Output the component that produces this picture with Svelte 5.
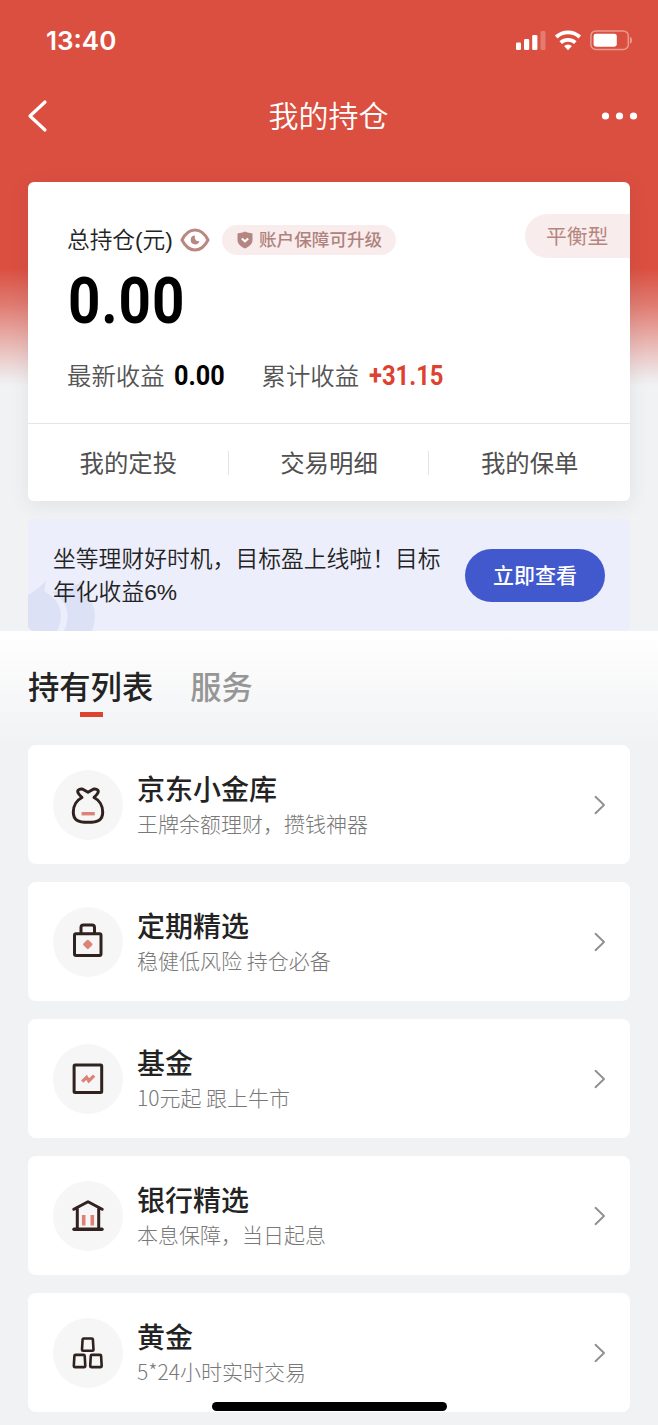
<script lang="ts">
  interface Holding {
    id: 'vault' | 'fixed' | 'fund' | 'bank' | 'gold';
    title: string;
    desc: string;
  }

  const links = ['我的定投', '交易明细', '我的保单'];

  const holdings: Holding[] = [
    { id: 'vault', title: '京东小金库', desc: '王牌余额理财，攒钱神器' },
    { id: 'fixed', title: '定期精选', desc: '稳健低风险 持仓必备' },
    { id: 'fund', title: '基金', desc: '10元起 跟上牛市' },
    { id: 'bank', title: '银行精选', desc: '本息保障，当日起息' },
    { id: 'gold', title: '黄金', desc: '5*24小时实时交易' },
  ];
</script>

<div class="page">
  <div class="status">
    <span class="time">13:40</span>
    <svg class="signals" width="118" height="22" viewBox="0 0 118 22" fill="#fff">
      <rect x="1" y="13.5" width="5" height="7.5" rx="1.3" />
      <rect x="9" y="10" width="5.2" height="11" rx="1.3" />
      <rect x="17.2" y="6" width="5.2" height="15" rx="1.3" />
      <rect x="25.5" y="2" width="5" height="19" rx="1.3" opacity=".25" />
      <g fill="none" stroke="#fff" stroke-width="3.8">
        <path d="M41.2 8a17.4 17.4 0 0 1 23.6 0" />
        <path d="M45.7 13.6a11 11 0 0 1 14.6 0" />
      </g>
      <path d="M53 21.3l-3.9-4.3a5.6 5.6 0 0 1 7.8 0z" />
      <rect x="75.9" y="1.9" width="37.4" height="18.6" rx="5" fill="none" stroke="#fff" stroke-width="1.5" opacity=".42" />
      <rect x="78.6" y="4.7" width="23.2" height="13" rx="2.4" />
      <path d="M114.9 7.8c3 1.2 3 5.8 0 7z" opacity=".42" />
    </svg>
  </div>

  <header class="nav">
    <svg width="22" height="34" viewBox="0 0 22 34" fill="none" stroke="#fff" stroke-width="3.2" stroke-linecap="round" stroke-linejoin="round">
      <path d="M19 3L4 17l15 14" />
    </svg>
    <h1>我的持仓</h1>
    <svg width="38" height="10" viewBox="0 0 38 10" fill="#fff">
      <circle cx="5.5" cy="5" r="3.6" />
      <circle cx="19.5" cy="5" r="3.6" />
      <circle cx="33.5" cy="5" r="3.6" />
    </svg>
  </header>

  <section class="card">
    <div class="summary">
      <div class="row">
        <span class="label">总持仓(元)</span>
        <svg class="eye" width="30" height="24" viewBox="0 0 30 24" fill="none" stroke="#bb8782" stroke-width="3">
          <path d="M2 12C5.5 5 10 2 15 2s9.5 3 13 10c-3.5 7-8 10-13 10S5.5 19 2 12z" stroke-linejoin="round" />
          <path d="M15 7.6a4.4 4.4 0 1 0 4.4 5.4c-2.8.7-5.4-1.4-4.4-5.4z" fill="#bb8782" stroke="none" />
        </svg>
        <span class="upgrade">
          <svg width="16" height="18" viewBox="0 0 16 18">
            <path d="M8 .6C5.8 2 3.2 2.200 1.200 2.300.7 2.300.5 2.700.5 3.100v6c0 4 3.400 6.600 7.500 8.400 4.100-1.800 7.500-4.400 7.500-8.400v-6c0-.4-.2-.8-.7-.8C12.800 2.200 10.200 2 8 .6z" fill="#b58581" />
            <path d="M4.8 7.4L8 10.300l3.200-2.900" fill="none" stroke="#fff" stroke-width="2" />
          </svg>
          <span>账户保障可升级</span>
        </span>
        <span class="risk">平衡型</span>
      </div>
      <div class="total"><span>0.00</span></div>
      <div class="earnings">
        <span class="name">最新收益</span>
        <span class="num latest">0.00</span>
        <span class="name">累计收益</span>
        <span class="num gain">+31.15</span>
      </div>
    </div>
    <nav class="links">
      {#each links as link}
        <span>{link}</span>
      {/each}
    </nav>
  </section>

  <section class="banner">
    <svg class="quote" width="70" height="52" viewBox="0 0 70 52" fill="#dde1f6">
      <path d="M0 16C7 12 13 7 19 1c-2 4-3 8-2 12 10 5 16 14 16 24 0 6-2 11-4 15H0z" />
      <path d="M24 13c7-1 13-2 19-5 5-2 9-4 12-7-2 4-2 8-1 12 8 5 13 14 13 23 0 6-1 11-3 16H36c7-15 4-30-12-39z" />
    </svg>
    <p>坐等理财好时机，目标盈上线啦！目标年化收益6%</p>
    <button>立即查看</button>
  </section>

  <div class="tabs">
    <span class="tab on">持有列表</span>
    <span class="tab">服务</span>
  </div>

  <div class="list">
    {#each holdings as item (item.id)}
      <div class="item">
        <div class="ic">
          <svg width="36" height="40" viewBox="0 0 36 40" fill="none" stroke="#30221f" stroke-width="3" stroke-linejoin="round" stroke-linecap="round">
            {#if item.id === 'vault'}
              <path d="M12 12.5C10 10.5 8.2 8.8 7.8 7c-.5-2.200 2.500-3.500 5-2.700L18 7.300l5.200-3c2.500-.8 5.500.5 5 2.700-.4 1.800-2.200 3.500-4.200 5.500 5 2.500 8.700 8 8.700 14.500 0 8-4.500 10.300-14.700 10.300S3.300 35 3.300 27c0-6.500 3.700-12 8.700-14.500z" />
              <path d="M11.6 28.7h13.2" stroke="#dc8277" stroke-linecap="butt" stroke-width="3.4" />
            {:else if item.id === 'fixed'}
              <rect x="4.5" y="11.8" width="26.5" height="21.8" rx="1.5" />
              <path d="M11 11.5V5.5A2.5 2.5 0 0 1 13.5 3H22a2.5 2.5 0 0 1 2.5 2.5v6" />
              <path d="M17.8 18.8l3.6 3.6-3.6 3.6-3.6-3.6z" fill="#dc8277" stroke="#dc8277" stroke-width="2.2" />
            {:else if item.id === 'fund'}
              <rect x="4.1" y="5.9" width="27.6" height="27.6" rx="1" />
              <path d="M12.2 22.6l4.4-4.2 2.2 3.4 5.4-5.2" stroke="#dc8277" stroke-width="3.3" stroke-linecap="butt" stroke-linejoin="miter" />
            {:else if item.id === 'bank'}
              <path d="M3.8 13.3L18 5.7l14.2 7.6M7.3 13V33M28.7 13V33" />
              <path d="M4 33.3h28" stroke-width="3.4" />
              <path d="M13.7 19v10.5M22.3 19v10.5" stroke="#dc8277" stroke-width="3.6" stroke-linecap="butt" />
            {:else}
              <g stroke-width="2.6">
                <path d="M13.7 5.5h8.1q1 0 1.100 1l.6 10.200q0 1-1 1H13q-1 0-1-1l.6-10.200q.1-1 1.100-1z" />
                <path d="M5.5 21.900h8.100q1 0 1.100 1l.6 10.200q0 1-1 1H4.800q-1 0-1-1l.6-10.200q.1-1 1.100-1z" />
                <path d="M21.9 21.900H30q1 0 1.100 1l.6 10.200q0 1-1 1H21.200q-1 0-1-1l.6-10.200q.1-1 1.100-1z" />
              </g>
            {/if}
          </svg>
        </div>
        <div class="text">
          <div class="title">{item.title}</div>
          <div class="desc">{item.desc}</div>
        </div>
        <svg class="arrow" width="12" height="20" viewBox="0 0 12 20" fill="none" stroke="#8f8f8f" stroke-width="1.9" stroke-linecap="round" stroke-linejoin="round">
          <path d="M1.5 1.8L10 10l-8.5 8.2" />
        </svg>
      </div>
    {/each}
  </div>

  <div class="home"></div>
</div>

<style>
  :global(body) { background: #f1f2f4; }

  .page {
    position: relative;
    box-sizing: border-box;
    width: 658px;
    height: 1425px;
    overflow: hidden;
    background: linear-gradient(#db4f40 0, #db4f40 268px, #e07a70 304px, #e9b5b0 342px, #eee4e5 374px, #f1f2f4 386px);
    font-family: "Liberation Sans", "Noto Sans CJK SC", sans-serif;
    color: #232323;
  }

  .status {
    display: flex;
    justify-content: space-between;
    align-items: center;
    height: 80px;
    padding: 0 25px 0 46px;
    color: #fff;
  }
  .time {
    font-family: Inter, sans-serif;
    font-size: 26px;
    font-weight: 600;
  }

  .nav {
    display: flex;
    justify-content: space-between;
    align-items: center;
    height: 72px;
    padding: 0 20px 0 26px;
    color: #fff;
  }
  h1 {
    margin: 2px 0 0 9px;
    font-size: 30px;
    font-weight: 350;
    line-height: 40px;
  }

  .card {
    margin: 30px 28px 0;
    height: 319px;
    border-radius: 6px;
    background: #fff;
    box-shadow: 0 4px 20px rgba(60, 70, 80, 0.09);
  }
  .summary {
    box-sizing: border-box;
    height: 242px;
    padding: 32px 0 0 39px;
    border-bottom: 1px solid #e4e5e6;
  }
  .row {
    display: flex;
    height: 52px;
    align-items: center;
  }
  .label {
    width: 107px;
    margin-top: -3px;
    font-size: 22.7px;
    font-weight: 350;
    white-space: nowrap;
  }
  .eye { margin: 0 12px 0 6px; }
  .upgrade {
    display: flex;
    align-items: center;
    gap: 6px;
    box-sizing: border-box;
    width: 174px;
    height: 30px;
    padding-left: 15px;
    border-radius: 15px;
    background: #f9ecec;
    color: #b0827d;
    font-size: 17.6px;
    font-weight: 500;
    white-space: nowrap;
  }
  .upgrade span {
    height: 30px;
    line-height: 30px;
  }
  .risk {
    box-sizing: border-box;
    width: 105px;
    height: 44px;
    margin: -8px 0 0 auto;
    padding-left: 21px;
    border-radius: 22px 0 0 22px;
    background: #f9ecec;
    color: #b58680;
    font-size: 20.8px;
    line-height: 46px;
  }
  .total {
    height: 70px;
    padding-left: 1px;
    color: #000;
    font: bold 65px/71px Roboto, sans-serif;
  }
  .total span {
    display: inline-block;
    letter-spacing: 1px;
    transform: scaleX(0.87);
    transform-origin: left;
  }
  .earnings {
    display: flex;
    align-items: center;
    height: 36px;
    margin-top: 22px;
    font-size: 24.4px;
    font-weight: 350;
    color: #555;
    white-space: nowrap;
  }
  .name {
    height: 36px;
    line-height: 37px;
  }
  .num {
    font: bold 28px/36px Roboto, sans-serif;
    transform: scaleX(0.9);
    transform-origin: left;
  }
  .latest {
    width: 88px;
    margin-left: 9px;
    color: #000;
  }
  .gain {
    margin-left: 10px;
    color: #dd4230;
    transform: scaleX(0.85);
  }

  .links {
    display: flex;
    height: 77px;
    align-items: center;
  }
  .links span {
    flex: 1;
    height: 24px;
    font-size: 24.4px;
    line-height: 26px;
    text-align: center;
    color: #505050;
  }
  .links span + span { box-shadow: -1px 0 #e3e4e5; }

  .banner {
    position: relative;
    display: flex;
    align-items: center;
    justify-content: space-between;
    height: 112px;
    margin: 18px 28px 0;
    padding: 0 25px;
    box-sizing: border-box;
    border-radius: 6px;
    overflow: hidden;
    background: #eceefb;
  }
  .quote {
    position: absolute;
    left: 0;
    bottom: 0;
  }
  p {
    position: relative;
    width: 392px;
    margin: 2px 0 0;
    font-size: 22.8px;
    font-weight: 350;
    line-height: 33px;
  }
  button {
    width: 140px;
    height: 53px;
    padding: 0 0 2px;
    border: 0;
    border-radius: 27px;
    background: #4259ce;
    color: #fff;
    font: 500 21px/51px "Noto Sans CJK SC", sans-serif;
  }

  .tabs {
    display: flex;
    gap: 37px;
    height: 114px;
    padding-left: 28px;
    background: linear-gradient(#fff, #f1f2f4);
  }
  .tab {
    position: relative;
    height: 86px;
    font-size: 31.3px;
    font-weight: 500;
    line-height: 115px;
    color: #969696;
  }
  .on { color: #232323; }
  .on::after {
    content: '';
    position: absolute;
    left: 52px;
    bottom: 0;
    width: 23px;
    height: 5px;
    background: #dc4330;
  }

  .list {
    display: flex;
    flex-direction: column;
    gap: 18px;
    margin: 0 28px;
  }
  .item {
    display: flex;
    align-items: center;
    box-sizing: border-box;
    height: 119px;
    padding: 0 24px 0 25px;
    border-radius: 8px;
    background: #fff;
  }
  .ic {
    display: grid;
    place-items: center;
    width: 70px;
    height: 70px;
    border-radius: 50%;
    background: #f6f6f6;
  }
  .text { margin-left: 14px; }
  .title {
    font-size: 28px;
    font-weight: 500;
    line-height: 40px;
  }
  .desc {
    margin: -2px 0 2px;
    font-family: "Noto Sans CJK SC", sans-serif;
    font-size: 21px;
    font-weight: 300;
    line-height: 28px;
    color: #787878;
  }
  .arrow { margin-left: auto; }

  .home {
    position: absolute;
    left: 212px;
    bottom: 14px;
    width: 235px;
    height: 9px;
    border-radius: 5px;
    background: #000;
  }
</style>
